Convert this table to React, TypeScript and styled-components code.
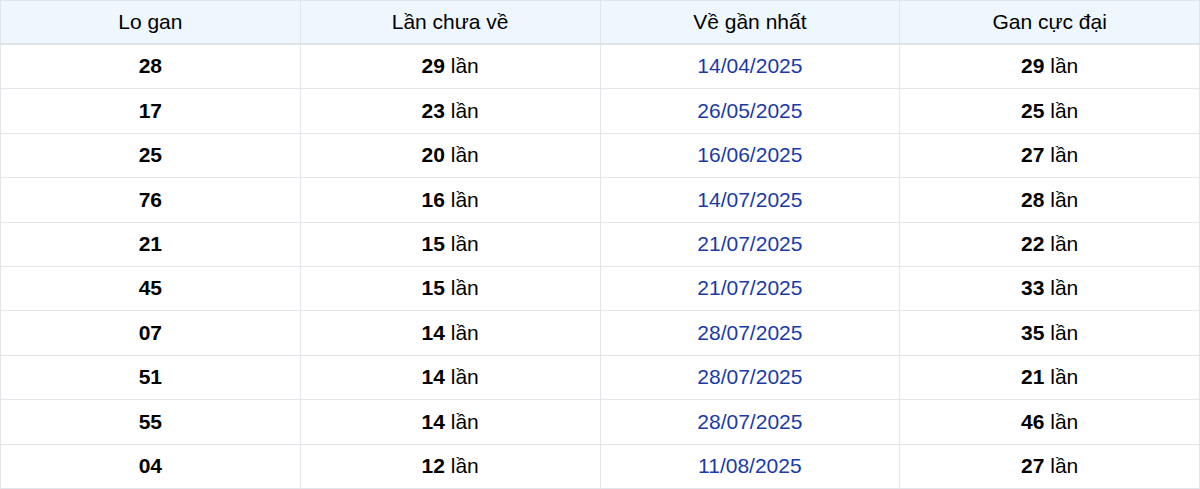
import styled, { createGlobalStyle } from 'styled-components';

const GlobalStyle = createGlobalStyle`
    body {
        margin: 0;
        background: #fff;
        font-family: "Liberation Sans", Arial, sans-serif;
    }
`;

type Row = { num: string; missed: number; last: string; max: number };

const rows: Row[] = [
    { num: '28', missed: 29, last: '14/04/2025', max: 29 },
    { num: '17', missed: 23, last: '26/05/2025', max: 25 },
    { num: '25', missed: 20, last: '16/06/2025', max: 27 },
    { num: '76', missed: 16, last: '14/07/2025', max: 28 },
    { num: '21', missed: 15, last: '21/07/2025', max: 22 },
    { num: '45', missed: 15, last: '21/07/2025', max: 33 },
    { num: '07', missed: 14, last: '28/07/2025', max: 35 },
    { num: '51', missed: 14, last: '28/07/2025', max: 21 },
    { num: '55', missed: 14, last: '28/07/2025', max: 46 },
    { num: '04', missed: 12, last: '11/08/2025', max: 27 },
];

const headers = ['Lo gan', 'Lần chưa về', 'Về gần nhất', 'Gan cực đại'];

const App = () => {
    return (<>
        <GlobalStyle />
        <Table>
            <thead>
                <tr>
                    {headers.map((h) => (<Th key={h}>{h}</Th>))}
                </tr>
            </thead>
            <tbody>
                {rows.map((r, idx) => (
                    <tr key={idx}>
                        <Td><Bold>{r.num}</Bold></Td>
                        <Td><Bold>{r.missed}</Bold> lần</Td>
                        <Td $date>{r.last}</Td>
                        <Td><Bold>{r.max}</Bold> lần</Td>
                    </tr>
                ))}
            </tbody>
        </Table>
    </>)
}

const Table = styled.table`
    width: 100%;
    border-collapse: collapse;
    table-layout: fixed;
    font-size: 21px;
    line-height: 23.4px;
    color: #000;
`;

const Th = styled.th`
    background: #eef6fe;
    font-weight: 400;
    padding: 9px 8px 9.5px;
    text-align: center;
    border: 1px solid #e2e6eb;
    border-bottom: 2px solid #dfe3e8;
`;

const Td = styled.td<{ $date?: boolean }>`
    padding: 9.5px 8px 10.5px;
    text-align: center;
    border: 1px solid #e2e6eb;
    color: ${(p) => (p.$date ? '#1a3aa8' : '#000')};
`;

const Bold = styled.b`
    font-weight: 700;
`;

export default App;
